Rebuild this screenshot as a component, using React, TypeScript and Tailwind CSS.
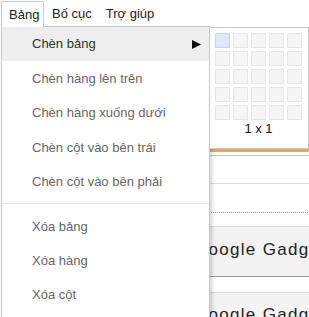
export default function App() {
  const firstGroup = [
    { label: "Chèn hàng lên trên", h: "h-[35px]" },
    { label: "Chèn hàng xuống dưới", h: "h-[34px]" },
    { label: "Chèn cột vào bên trái", h: "h-[35px]" },
    { label: "Chèn cột vào bên phải", h: "h-[34px]" },
  ];
  const secondGroup = ["Xóa bảng", "Xóa hàng", "Xóa cột"];
  const cells = Array.from({ length: 25 }, (_, i) => i);

  return (
    <div className="relative w-[309px] h-[317px] overflow-hidden bg-white font-['Liberation_Sans',Arial,sans-serif] text-[13px]">
      {/* menu bar */}
      <div className="flex h-[27px] pt-[1px] text-[#222]">
        <div className="relative z-40 ml-[1px] flex h-[26px] w-[43px] items-center border-x border-t border-[#c8c8c8] bg-white pl-[7px]">
          Bảng
        </div>
        <div className="ml-[8px] flex items-center">Bố cục</div>
        <div className="ml-[14px] flex items-center">Trợ giúp</div>
      </div>

      {/* page behind the menu */}
      <div className="flex">
        <div className="flex w-[1px] flex-col">
          <div className="h-[42px] bg-[#dcdcdc]" />
          <div className="h-[19px] bg-[#e8c34a]" />
          <div className="h-[2px] bg-[#9b1c1c]" />
          <div className="h-[62px] bg-[#e8c34a]" />
          <div className="h-[21px] bg-[#1d6a9a]" />
          <div className="h-[63px] bg-[#dcdcdc]" />
          <div className="h-[2px] bg-[#d33]" />
          <div className="h-[5px] bg-[#dcdcdc]" />
          <div className="h-[2px] bg-[#d33]" />
          <div className="h-[22px] bg-[#dcdcdc]" />
          <div className="h-[15px] bg-[#f0cf6a]" />
          <div className="h-[40px] bg-[#dcdcdc]" />
        </div>
        <div className="flex flex-1 flex-col pl-[1px]">
          <div className="h-[122px]" />
          <div className="h-[3px] bg-[#e2b135]" />
          <div className="h-[3px]" />
          <div className="h-[1px] bg-[#c4c4c4]" />
          <div className="h-[27px]" />
          <div className="h-[1px] bg-[#dcdcdc]" />
          <div className="h-[28px]" />
          <div className="border-t border-dotted border-[#9a9a9a]" />
          <div className="h-[13px]" />
          <div className="h-[1px] bg-[#dcdcdc]" />
          <div className="h-[49px] whitespace-nowrap bg-[#f3f3f3] pl-[193px] pt-[13px] text-[17px] leading-[19px] tracking-[1.3px] text-[#222]">
            Google Gadget
          </div>
          <div className="h-[1px] bg-[#9a9a9a]" />
          <div className="h-[15px]" />
          <div className="h-[1px] bg-[#dcdcdc]" />
          <div className="h-[40px] whitespace-nowrap bg-[#f3f3f3] pl-[193px] pt-[12px] text-[17px] leading-[19px] tracking-[1.3px] text-[#222]">
            Google Gadget
          </div>
        </div>
      </div>

      {/* dropdown */}
      <div className="absolute left-[1px] top-[26px] z-30 h-[300px] w-[209px] border border-[#c8c8c8] bg-white shadow-[2px_2px_4px_rgba(0,0,0,0.18)]">
        <div className="flex h-[34px] items-center justify-between bg-[#eeeeee] pl-[30px] pr-[8px] text-[#333]">
          <span>Chèn bảng</span>
          <svg width="9" height="9" viewBox="0 0 9 9">
            <polygon points="0,0 9,4.5 0,9" fill="#111" />
          </svg>
        </div>
        {firstGroup.map((item) => (
          <div key={item.label} className={`flex ${item.h} items-center pl-[30px] text-[#666]`}>
            {item.label}
          </div>
        ))}
        <div className="mb-[6px] mt-[4px] h-[1px] bg-[#e5e5e5]" />
        {secondGroup.map((label) => (
          <div key={label} className="flex h-[34px] items-center pl-[30px] text-[#666]">
            {label}
          </div>
        ))}
      </div>

      {/* table size picker */}
      <div className="absolute left-[209px] top-[27px] z-40 flex h-[122px] w-[100px] flex-col border border-[#c8c8c8] bg-white pl-[5px] pt-[5px]">
        <div className="grid w-[87px] grid-cols-5 gap-[3px]">
          {cells.map((i) => (
            <div
              key={i}
              className={
                i === 0
                  ? "h-[15px] w-[15px] border border-[#c3d5f2] bg-[#dde8fb]"
                  : "h-[15px] w-[15px] border border-[#e6e6e6] bg-[#f5f5f5]"
              }
            />
          ))}
        </div>
        <div className="mt-[1px] w-[87px] text-center leading-[15px] text-[#111]">1 x 1</div>
      </div>
    </div>
  );
}
